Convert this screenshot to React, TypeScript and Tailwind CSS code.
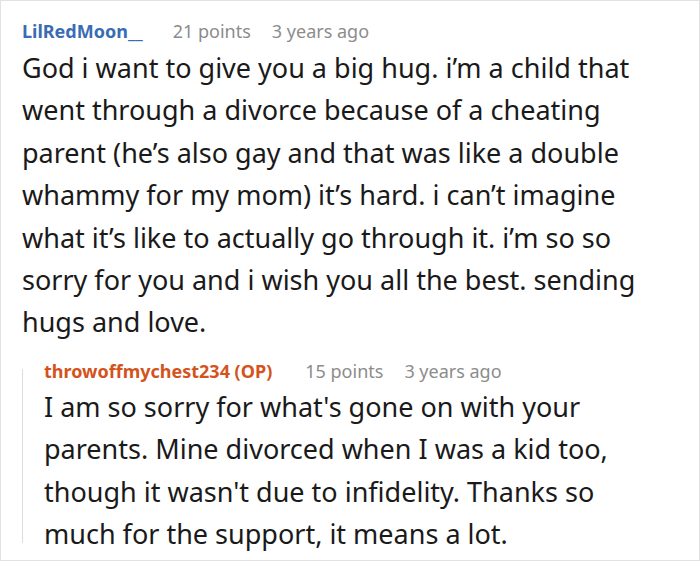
import React from 'react';

const font = { fontFamily: '"Noto Sans", "Open Sans", sans-serif' };

type Meta = { user: string; points: string; ago: string; op?: boolean };

const Header: React.FC<Meta> = ({ user, points, ago, op }) => (
  <div className="flex items-baseline text-[18px] leading-[24px]">
    <span className={op ? 'font-bold text-[#d4531c]' : 'font-bold text-[#3a6cb4]'}>{user}</span>
    <span className={op ? 'ml-[33px] text-[#8c8c8c]' : 'ml-[30px] text-[#8c8c8c]'}>{points}</span>
    <span className="ml-[21px] text-[#8c8c8c]">{ago}</span>
  </div>
);

export default function App() {
  return (
    <div style={font} className="w-[700px] h-[561px] bg-white border border-[#e2e2e2] overflow-hidden">
      <div className="pl-[21px] pr-4 pt-[18px]">
        <Header user="LilRedMoon__" points="21 points" ago="3 years ago" />
        <p className="mt-[4px] text-[27px] leading-[42.4px] text-[#1a1a1a]">
          God i want to give you a big hug. i’m a child that went through a divorce because of a cheating parent (he’s
          also gay and that was like a double whammy for my mom) it’s hard. i can’t imagine what it’s like to actually
          go through it. i’m so so sorry for you and i wish you all the best. sending hugs and love.
        </p>
        <div className="mt-[15px] flex">
          <div className="w-px shrink-0 bg-[#dcdcdc] mt-[10px] mb-[12px]" />
          <div className="pl-[21px] min-w-0">
            <Header user="throwoffmychest234 (OP)" points="15 points" ago="3 years ago" op />
            <p className="mt-[3px] max-w-[600px] text-[27px] leading-[42.4px] text-[#1a1a1a]">
              I am so sorry for what's gone on with your parents. Mine divorced when I was a kid too, though it wasn't
              due to infidelity. Thanks so much for the support, it means a lot.
            </p>
          </div>
        </div>
      </div>
    </div>
  );
}
